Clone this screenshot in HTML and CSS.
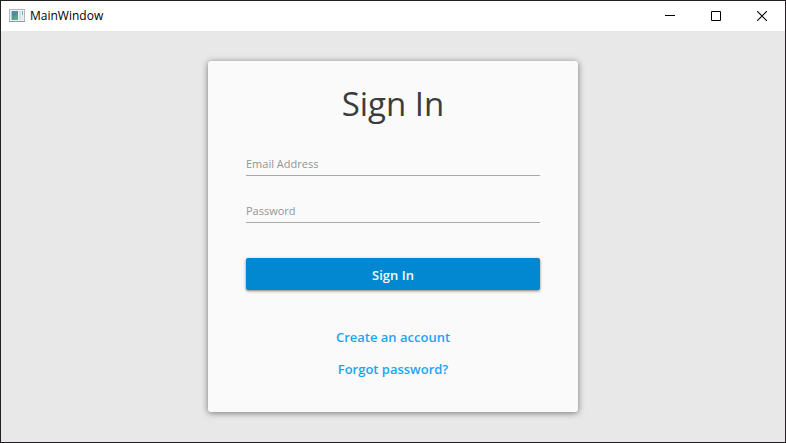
FILE: index.html
```html
<!DOCTYPE html>
<html lang="en">
<head>
<meta charset="utf-8">
<meta name="viewport" content="width=device-width, initial-scale=1">
<title>MainWindow</title>
<link rel="stylesheet" href="styles.css">
</head>
<body>
<div class="window">
  <header class="titlebar">
    <svg class="app-icon" width="16" height="14" viewBox="0 0 16 14" aria-hidden="true">
      <defs>
        <linearGradient id="pane" x1="0" y1="0" x2="0.4" y2="1">
          <stop offset="0" stop-color="#5f86b8"/>
          <stop offset="0.5" stop-color="#4a8f9c"/>
          <stop offset="1" stop-color="#5fae80"/>
        </linearGradient>
      </defs>
      <rect x="0.5" y="0.5" width="15" height="12" fill="#eef0f2" stroke="#b3b9be"/>
      <rect x="0" y="12" width="16" height="1" fill="#92989d"/>
      <rect x="2" y="2" width="7" height="9" fill="url(#pane)"/>
      <rect x="2" y="2" width="1" height="9" fill="#a9c3cf"/>
      <rect x="10" y="2" width="2" height="9" fill="#d5dee5"/>
      <rect x="13" y="2" width="1" height="4" fill="#7fa3bd"/>
      <rect x="13" y="6" width="1" height="5" fill="#dfe4e7"/>
    </svg>
    <span class="window-title">MainWindow</span>
    <div class="window-controls">
      <button type="button" aria-label="Minimize">
        <svg width="10" height="10" viewBox="0 0 10 10"><path d="M0 4.5H10" stroke="#000"/></svg>
      </button>
      <button type="button" aria-label="Maximize">
        <svg width="10" height="10" viewBox="0 0 10 10"><path d="M.5 .5H9.500V9.500H.5Z" fill="none" stroke="#000"/></svg>
      </button>
      <button type="button" aria-label="Close">
        <svg width="10" height="10" viewBox="0 0 10 10"><path d="M0 0L10 10M10 0L0 10" stroke="#000" stroke-width="1.100"/></svg>
      </button>
    </div>
  </header>
  <main class="content">
    <form class="card">
      <h1>Sign In</h1>
      <input class="field" type="email" placeholder="Email Address" aria-label="Email Address">
      <input class="field" type="password" placeholder="Password" aria-label="Password">
      <button class="submit" type="submit">Sign In</button>
      <nav class="links">
        <a href="#create">Create an account</a>
        <a href="#forgot">Forgot password?</a>
      </nav>
    </form>
  </main>
</div>
</body>
</html>
```
FILE: styles.css
```css
* {
  box-sizing: border-box;
}

body {
  margin: 0;
  font-family: "Open Sans", "Noto Sans", sans-serif;
}

.window {
  display: flex;
  flex-direction: column;
  min-height: 100vh;
  border: 1px solid #231f22;
  background: #e8e8e8;
}

.titlebar {
  display: flex;
  align-items: center;
  height: 30px;
  padding-left: 8px;
  background: #fff;
}

.window-title {
  margin-left: 5px;
  font-size: 12px;
  line-height: 16px;
  color: #000;
}

.window-controls {
  display: flex;
  align-self: stretch;
  margin-left: auto;
}

.window-controls button {
  display: flex;
  align-items: center;
  justify-content: center;
  width: 46px;
  padding: 0;
  border: 0;
  background: none;
}

.content {
  display: flex;
  flex: 1;
  align-items: center;
  justify-content: center;
  padding: 30px 16px;
}

.card {
  display: flex;
  flex-direction: column;
  width: 100%;
  max-width: 370px;
  padding: 20px 38px 27px;
  border-radius: 3px;
  background: #fafafa;
  box-shadow: 0 1px 6px rgba(0, 0, 0, 0.5);
}

h1 {
  margin: 0 0 26px;
  font-size: 33px;
  font-weight: 400;
  line-height: 46px;
  text-align: center;
  color: #3c3c3c;
}

.field {
  width: 100%;
  height: 23px;
  margin-bottom: 24px;
  padding: 0 0 1px;
  border: 0;
  border-bottom: 1px solid #a8a8aa;
  border-radius: 0;
  outline: 0;
  background: transparent;
  font-family: inherit;
  font-size: 11px;
  color: #3c3c3c;
}

.field::placeholder {
  color: #959595;
  opacity: 1;
}

.submit {
  height: 32px;
  margin-top: 11px;
  padding: 1px 0 0;
  border: 0;
  border-radius: 2px;
  background: #0288d1;
  box-shadow: 0 1px 3px rgba(0, 0, 0, 0.5);
  font-family: inherit;
  font-size: 13px;
  font-weight: 600;
  color: #f2fbff;
}

.links {
  display: flex;
  flex-direction: column;
  align-items: center;
  margin-top: 31px;
}

.links a {
  font-size: 13px;
  font-weight: 600;
  line-height: 32px;
  text-decoration: none;
  color: #1ba5f2;
}
```
